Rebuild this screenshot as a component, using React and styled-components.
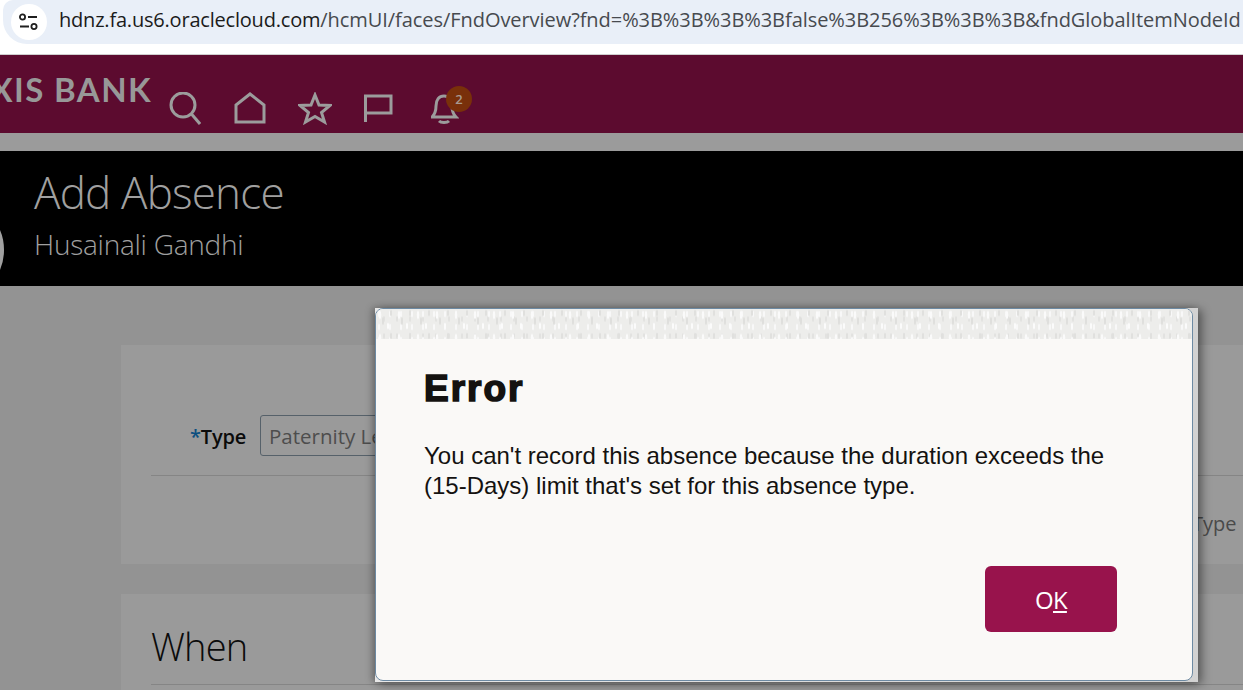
import React from "react";
import styled, { createGlobalStyle } from "styled-components";

const Global = createGlobalStyle`
  html, body { margin: 0; padding: 0; height: 690px; overflow: hidden; background: #939393; }
  #root { height: 690px; }
  * { box-sizing: border-box; }
`;

const Page = styled.div`
  position: relative;
  width: 1243px;
  height: 690px;
  overflow: hidden;
  display: flex;
  flex-direction: column;
  background: #939393;
  font-family: "Open Sans", sans-serif;
`;

const BrowserBar = styled.div`
  flex: none;
  height: 55px;
  background: #fff;
  border-bottom: 1px solid #cfcfcf;
  padding: 0 0 0 3px;
`;

const UrlPill = styled.div`
  height: 44px;
  background: #e9eff8;
  border-radius: 10px 0 0 24px;
  display: flex;
  align-items: center;
  padding-left: 8px;
  overflow: hidden;
`;

const SiteInfo = styled.div`
  flex: none;
  width: 36px;
  height: 36px;
  border-radius: 50%;
  background: #fff;
  display: flex;
  align-items: center;
  justify-content: center;
  margin-right: 12px;
`;

const Url = styled.div`
  font-family: "Open Sans", sans-serif;
  font-size: 20px;
  letter-spacing: -0.06px;
  color: #474a4f;
  white-space: nowrap;
  margin-top: -6px;
`;

const Host = styled.span`
  color: #1b1b1b;
  letter-spacing: -0.2px;
`;

const AppHeader = styled.header`
  flex: none;
  height: 78px;
  background: #5c0b2f;
  display: flex;
  align-items: flex-start;
`;

const Brand = styled.div`
  flex: none;
  width: 152px;
  height: 78px;
  overflow: hidden;
  display: flex;
  justify-content: flex-end;
  padding-top: 14px;
  font-family: "Lato", sans-serif;
  font-size: 33px;
  line-height: 40px;
  font-weight: 700;
  letter-spacing: 1.4px;
  color: #989898;
  white-space: nowrap;
`;

const IconRow = styled.nav`
  display: flex;
  align-items: flex-start;
  padding-top: 37px;
  margin-left: 17px;
`;

const HeaderIcon = styled.svg`
  display: block;
  flex: none;
  margin-right: ${(p) => p.$gap}px;
  fill: none;
  stroke: #9c9c9c;
  stroke-width: 3;
`;

const BellWrap = styled.div`
  position: relative;
  width: 28px;
  height: 32px;
`;

const Badge = styled.span`
  position: absolute;
  left: 15px;
  top: -6px;
  width: 26px;
  height: 26px;
  border-radius: 50%;
  background: #79300a;
  color: #a89a90;
  font-size: 13px;
  font-weight: 600;
  display: flex;
  align-items: center;
  justify-content: center;
`;

const Gap = styled.div`
  flex: none;
  height: 18px;
  background: #9b9b9b;
`;

const TitleBand = styled.section`
  position: relative;
  flex: none;
  height: 135px;
  background: #000;
  padding: 11px 0 0 34px;
  overflow: hidden;
`;

const Avatar = styled.div`
  position: absolute;
  left: -96px;
  top: 49px;
  width: 100px;
  height: 100px;
  border-radius: 50%;
  border: 4px solid #a0a0a0;
`;

const Title = styled.h1`
  margin: 0;
  font-family: "Open Sans", sans-serif;
  font-weight: 300;
  font-size: 44px;
  line-height: 60px;
  letter-spacing: -0.8px;
  color: #a0a0a0;
`;

const Person = styled.div`
  margin-top: 3px;
  font-weight: 300;
  font-size: 28px;
  line-height: 38px;
  letter-spacing: -0.25px;
  color: #a0a0a0;
`;

const Content = styled.main`
  flex: 1;
  padding: 59px 0 0 121px;
  display: flex;
  flex-direction: column;
  gap: 30px;
`;

const Card = styled.section`
  flex: none;
  height: ${(p) => p.$h}px;
  background: #9a9a9a;
  padding-left: 30px;
`;

const TypeRow = styled.div`
  height: 131px;
  padding-top: 70px;
  border-bottom: 1px solid #858585;
  display: flex;
  align-items: flex-start;
`;

const FieldLabel = styled.label`
  width: 95px;
  text-align: right;
  font-size: 20px;
  font-weight: 600;
  line-height: 44px;
  letter-spacing: -0.2px;
  color: #0b0b0b;
`;

const Req = styled.span`
  color: #0c4f80;
`;

const TypeInput = styled.div`
  margin-left: 14px;
  width: 400px;
  height: 41px;
  border: 1px solid #56616a;
  border-radius: 3px;
  padding-left: 8px;
  font-size: 20.5px;
  line-height: 41px;
  font-weight: 500;
  color: #4d4d4d;
  white-space: nowrap;
`;

const SideLabel = styled.div`
  display: flex;
  justify-content: flex-start;
  padding: 35px 0 0 1041px;
  font-size: 20px;
  font-weight: 500;
  line-height: 26px;
  color: #4a4a4a;
  white-space: pre;
`;

const SectionTitle = styled.h2`
  margin: 0;
  height: 91px;
  padding-top: 27px;
  border-bottom: 1px solid #858585;
  font-weight: 300;
  font-size: 38px;
  line-height: 50px;
  letter-spacing: -0.8px;
  color: #0b0b0b;
`;

const DialogFrame = styled.div`
  position: absolute;
  left: 375px;
  top: 308px;
  width: 823px;
  height: 374px;
  padding: 0 5px 1px 0;
  background: linear-gradient(90deg, #e8e8e8, #d2d2d2);
  box-shadow: 4px 2px 9px rgba(0, 0, 0, 0.4), -3px 0 7px rgba(0, 0, 0, 0.25);
  display: flex;
`;

const Dialog = styled.div`
  flex: 1;
  background: #faf9f7;
  border: 1px solid #6d8aa3;
  border-radius: 8px;
  overflow: hidden;
  display: flex;
  flex-direction: column;
`;

const DialogStrip = styled.div`
  flex: none;
  height: 30px;
  background-color: #ededeb;
  background-image:
    radial-gradient(ellipse 1.6px 5px at 4px 6px, #fafafa 60%, transparent),
    radial-gradient(ellipse 1.4px 4px at 12px 17px, #fbfbfb 60%, transparent),
    radial-gradient(ellipse 1.2px 5px at 7px 12px, #dfdfdd 60%, transparent),
    radial-gradient(ellipse 1.2px 4px at 15px 4px, #e0e0de 60%, transparent),
    radial-gradient(ellipse 1.5px 4px at 3px 5px, #f8f8f8 60%, transparent),
    radial-gradient(ellipse 1px 4px at 8px 10px, #e2e2e0 60%, transparent);
  background-size: 19px 23px, 19px 23px, 19px 23px, 19px 23px, 11px 13px, 13px 17px;
`;

const DialogBody = styled.div`
  flex: 1;
  padding: 28px 75px 0 48px;
  display: flex;
  flex-direction: column;
`;

const ErrorTitle = styled.h3`
  margin: 0;
  font-family: "Liberation Sans", Arial, sans-serif;
  font-weight: 700;
  font-size: 37px;
  line-height: 44px;
  letter-spacing: 2px;
  color: #141210;
  -webkit-text-stroke: 1.6px #141210;
`;

const Message = styled.p`
  margin: 30px 0 0;
  font-family: "Liberation Sans", Arial, sans-serif;
  font-size: 24px;
  line-height: 30px;
  color: #141210;
`;

const Actions = styled.div`
  margin-top: 65px;
  display: flex;
  justify-content: flex-end;
`;

const OkButton = styled.button`
  width: 132px;
  height: 66px;
  border: 0;
  border-radius: 6px;
  background: #98134c;
  color: #fff;
  font-family: "Open Sans", sans-serif;
  font-size: 24px;
  letter-spacing: -0.8px;
  padding: 0;
`;

const Search = () => (
  <HeaderIcon $gap={33} width="32" height="34" viewBox="0 0 32 34">
    <circle cx="14" cy="13" r="12" />
    <path d="M22.5 22 L31 32" />
  </HeaderIcon>
);
const Home = () => (
  <HeaderIcon $gap={32} width="32" height="34" viewBox="0 0 32 34">
    <path d="M2 30 V13 L16 2 L30 13 V30 Z" />
  </HeaderIcon>
);
const Star = () => (
  <HeaderIcon $gap={31} width="34" height="34" viewBox="0 0 34 34">
    <path d="M17 3 L21 13 L32 13.5 L23.5 20.5 L26.5 30 L17 24.5 L7.5 30 L10.5 20.5 L2 13.5 L13 13 Z" />
  </HeaderIcon>
);
const Flag = () => (
  <HeaderIcon $gap={38} width="30" height="34" viewBox="0 0 30 34">
    <path d="M2.5 30 V4 H28 V21 H2.5" />
  </HeaderIcon>
);
const Bell = () => (
  <BellWrap>
    <HeaderIcon $gap={0} width="28" height="32" viewBox="0 0 28 32">
      <path d="M1 25 C4 22 5 19 5 14 C5 8 8 4 13 4 C18 4 21 8 21 14 C21 19 22 22 25 25 Z" />
      <path d="M8 29 C10 31 16 31 18 29" />
    </HeaderIcon>
    <Badge>2</Badge>
  </BellWrap>
);

export default function App() {
  return (
    <Page>
      <Global />
      <BrowserBar>
        <UrlPill>
          <SiteInfo>
            <svg width="20" height="18" viewBox="0 0 20 18" fill="none" stroke="#1f1f1f" strokeWidth="1.8">
              <circle cx="3.5" cy="4" r="2.6" />
              <path d="M9 4 H18" />
              <path d="M1 13.5 H10" />
              <circle cx="15" cy="13.5" r="2.6" />
            </svg>
          </SiteInfo>
          <Url>
            <Host>hdnz.fa.us6.oraclecloud.com</Host>
            /hcmUI/faces/FndOverview?fnd=%3B%3B%3B%3Bfalse%3B256%3B%3B%3B&amp;fndGlobalItemNodeId
          </Url>
        </UrlPill>
      </BrowserBar>
      <AppHeader>
        <Brand>AXIS BANK</Brand>
        <IconRow>
          <Search />
          <Home />
          <Star />
          <Flag />
          <Bell />
        </IconRow>
      </AppHeader>
      <Gap />
      <TitleBand>
        <Avatar />
        <Title>Add Absence</Title>
        <Person>Husainali Gandhi</Person>
      </TitleBand>
      <Content>
        <Card $h={219}>
          <TypeRow>
            <FieldLabel>
              <Req>*</Req>Type
            </FieldLabel>
            <TypeInput>Paternity Leave</TypeInput>
          </TypeRow>
          <SideLabel>Type I</SideLabel>
        </Card>
        <Card $h={120}>
          <SectionTitle>When</SectionTitle>
        </Card>
      </Content>
      <DialogFrame>
        <Dialog role="alertdialog">
          <DialogStrip />
          <DialogBody>
            <ErrorTitle>Error</ErrorTitle>
            <Message>
              You can't record this absence because the duration exceeds the (15-Days) limit that's set for this absence type.
            </Message>
            <Actions>
              <OkButton>
                O<u>K</u>
              </OkButton>
            </Actions>
          </DialogBody>
        </Dialog>
      </DialogFrame>
    </Page>
  );
}
